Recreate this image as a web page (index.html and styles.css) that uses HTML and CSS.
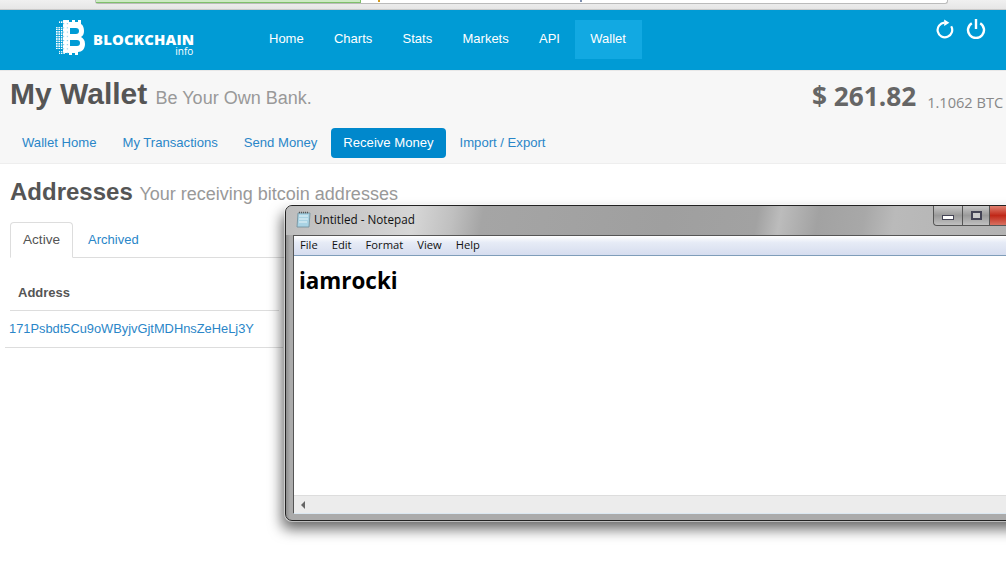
FILE: index.html
```html
<!DOCTYPE html>
<html lang="en">
<head>
<meta charset="utf-8">
<title>My Wallet</title>
<link rel="stylesheet" href="styles.css">
</head>
<body>
<div class="chrome">
  <div class="urlbar"><div class="secure"></div><i class="mark mark-a"></i><i class="mark mark-b"></i></div>
</div>
<header class="topbar">
  <a class="logo">
    <svg class="logo-mark" width="30" height="37" viewBox="0 0 30 37">
      <defs>
        <pattern id="dots" width="2.4" height="2.4" patternUnits="userSpaceOnUse">
          <rect width="1.6" height="1.6" fill="#fff"/>
        </pattern>
        <pattern id="holes" width="3.6" height="4.2" patternUnits="userSpaceOnUse">
          <rect width="1" height="1" fill="#5cbfe4"/>
        </pattern>
      </defs>
      <path d="M3 4h7V2H3zM0 8h7v22H0zM3 32h6v3H3z" fill="url(#dots)"/>
      <path d="M7 1h6v2h3V1h3v2h3V1h3v4c2 1 3 4 3 7 0 3-1 5-3 6 2 1 4 3 4 7 0 5-3 8-7 8v3h-3v-2h-3v2h-3v-2H7z" fill="#fff"/>
      <path d="M7 1h6v34H7z" fill="url(#holes)"/>
      <path d="M14 9h6c2 0 3 1 3 3s-1 3-3 3h-6zM14 21h7c2 0 3 1 3 3s-1 3-3 3h-7z" fill="#009bd5"/>
    </svg>
    <span class="logo-text"><span class="logo-name">BLOCKCHAIN</span><span class="logo-sub">info</span></span>
  </a>
  <nav class="mainnav">
    <a class="navitem">Home</a>
    <a class="navitem">Charts</a>
    <a class="navitem">Stats</a>
    <a class="navitem">Markets</a>
    <a class="navitem">API</a>
    <a class="navitem navitem-on">Wallet</a>
  </nav>
  <div class="tools">
    <svg width="20" height="20" viewBox="0 0 20 20" fill="none" stroke="#fff" stroke-width="2.2">
      <path d="M16.2 7.3A7.3 7.3 0 1 1 9.5 3.7"/>
      <path d="M9.2 .6l5.2 3.2-5.2 3.2z" fill="#fff" stroke="none"/>
    </svg>
    <svg width="20" height="20" viewBox="0 0 20 20" fill="none" stroke="#fff" stroke-width="2.4">
      <path d="M5.8 4.2a8 8 0 1 0 8.4 0"/>
      <path d="M10 0v10"/>
    </svg>
  </div>
</header>
<section class="subhead">
  <div class="titlerow">
    <h1 class="pagetitle">My Wallet <small class="tagline">Be Your Own Bank.</small></h1>
    <div class="balance"><span class="fiat">$ 261.82</span><span class="btc">1.1062 BTC</span></div>
  </div>
  <nav class="pills">
    <a class="pill">Wallet Home</a>
    <a class="pill">My Transactions</a>
    <a class="pill">Send Money</a>
    <a class="pill pill-on">Receive Money</a>
    <a class="pill">Import / Export</a>
  </nav>
</section>
<main class="content">
  <h2 class="sectiontitle">Addresses <small class="sectionsub">Your receiving bitcoin addresses</small></h2>
  <div class="tabs">
    <a class="tab tab-on">Active</a>
    <a class="tab">Archived</a>
  </div>
  <div class="tablehead">Address</div>
  <div class="tablerow"><a class="addr">171Psbdt5Cu9oWByjvGjtMDHnsZeHeLj3Y</a></div>
</main>
<div class="notepad">
  <div class="np-title">
    <svg class="np-icon" width="16" height="17" viewBox="0 0 16 17">
      <path d="M2 2h12l-1 14H1z" fill="#a9d3e4" stroke="#6d8b98" stroke-width=".8"/>
      <path d="M3 5h9M3 8h9M3 11h8" stroke="#e8f4f8" stroke-width="1"/>
      <path d="M3 1.5h10" stroke="#555" stroke-width="1.4" stroke-dasharray="1 1"/>
    </svg>
    <span class="np-name">Untitled - Notepad</span>
    <div class="np-buttons">
      <span class="np-btn np-min"><i class="np-minglyph"></i></span>
      <span class="np-btn np-max"><i class="np-maxglyph"></i></span>
      <span class="np-btn np-close"></span>
    </div>
  </div>
  <div class="np-client">
    <div class="np-menu">
      <span>File</span><span>Edit</span><span>Format</span><span>View</span><span>Help</span>
    </div>
    <div class="np-text">iamrocki</div>
    <div class="np-scroll"><i class="np-arrow"></i></div>
  </div>
</div>
</body>
</html>
```
FILE: styles.css
```css
html, body { margin: 0; padding: 0; }
body {
  width: 1006px;
  height: 567px;
  overflow: hidden;
  position: relative;
  background: #fff;
  font-family: "Liberation Sans", Arial, sans-serif;
  font-size: 13px;
  color: #555;
}
a { text-decoration: none; }
.chrome {
  height: 9px;
  background: linear-gradient(#f0f0f0, #e6e6e6);
  border-bottom: 1px solid #c9c9c9;
  padding-left: 95px;
}
.urlbar {
  width: 851px;
  height: 3px;
  background: #fff;
  border: 1px solid #bbb;
  border-top: 0;
  border-radius: 0 0 3px 3px;
  display: flex;
}
.secure { width: 264px; height: 2px; background: #cdeac4; border-bottom: 1px solid #7fc06b; border-right: 1px solid #7fc06b; }
.mark { width: 2px; height: 2px; }
.mark-a { background: #d49a1e; margin-left: 17px; }
.mark-b { background: #7d8fb0; margin-left: 200px; }
.topbar {
  height: 60px;
  background: #009bd5;
  display: flex;
  position: relative;
}
.logo { display: flex; margin-left: 56px; width: 198px; }
.logo-mark { margin-top: 9px; }
.logo-text { display: flex; flex-direction: column; align-items: flex-end; margin-left: 7px; padding-top: 23px; }
.logo-name { font-family: "Open Sans", sans-serif; font-weight: 800; font-size: 14.8px; line-height: 13px; color: #fff; letter-spacing: .2px; }
.logo-sub { font-family: "Open Sans", sans-serif; font-size: 10px; line-height: 11px; color: #fff; margin-right: 1px; }
.mainnav { display: flex; align-items: flex-start; padding-top: 10px; }
.navitem { color: #fff; font-size: 13px; padding: 0 15px; height: 39px; line-height: 38px; margin-right: .3px; }
.navitem-on { background: #12a9e2; padding-right: 16px; }
.tools { margin-left: auto; display: flex; gap: 11px; padding: 9px 20px 0 0; align-items: flex-start; height: 20px; }
.subhead {
  background: #f7f7f7;
  border-top: 1px solid #e8e8e8;
  border-bottom: 1px solid #eee;
  height: 92px;
}
.titlerow { display: flex; justify-content: space-between; height: 57px; }
.pagetitle { margin: 6px 0 0 10px; font-size: 30px; line-height: 34px; font-weight: bold; color: #555; }
.tagline { font-size: 18px; font-weight: normal; color: #999; }
.balance { display: flex; align-items: flex-start; margin-top: 6px; width: 194px; flex: none; white-space: nowrap; overflow: hidden; }
.fiat { font-family: "Open Sans", sans-serif; font-weight: bold; font-size: 26.2px; line-height: 38px; color: #666; }
.btc { font-family: "Open Sans", sans-serif; font-size: 14.6px; line-height: 20px; color: #888; margin: 15px 0 0 11px; }
.pills { display: flex; gap: 1px; padding-left: 10px; }
.pill { padding: 0 12px; height: 30px; line-height: 30px; color: #2a86c8; font-size: 13.1px; border-radius: 4px; margin-right: 1px; }
.pill-on { background: #0088cc; color: #fff; }
.content { padding: 0 0 0 5px; }
.sectiontitle { margin: 14px 0 0 5px; font-size: 24px; line-height: 28px; color: #555; font-weight: bold; }
.sectionsub { font-size: 18px; font-weight: normal; color: #999; }
.tabs { display: flex; margin: 14px 0 0 5px; border-bottom: 1px solid #ddd; height: 35px; width: 275px; }
.tab { padding: 0 14px; line-height: 35px; height: 36px; color: #2a86c8; font-size: 13px; margin-right: 1px; box-sizing: border-box; }
.tab-on { color: #555; font-size: 13.6px; line-height: 34px; border: 1px solid #ddd; border-bottom: 1px solid #fff; border-radius: 4px 4px 0 0; padding: 0 12px; }
.tablehead { width: 269px; margin-left: 5px; padding-left: 8px; height: 53px; line-height: 70px; box-sizing: border-box; font-weight: bold; color: #555; font-size: 13px; border-bottom: 1px solid #ddd; }
.tablerow { width: 274px; height: 36px; line-height: 35px; border-bottom: 1px solid #ddd; padding-left: 4px; }
.addr { color: #2a86c8; font-size: 12.85px; }
.notepad {
  position: absolute;
  left: 285px;
  top: 205px;
  width: 760px;
  height: 316px;
  box-sizing: border-box;
  border: 1px solid #222;
  border-radius: 7px;
  background: linear-gradient(90deg, #8e8e8e, #ababab 4px, #ababab);
  box-shadow: 0 0 0 1px rgba(255,255,255,.5), -3px 8px 14px rgba(0,0,0,.6);
  padding: 0 7px 6px 7px;
  display: flex;
  flex-direction: column;
}
.np-title { height: 29px; flex: none; display: flex; align-items: center; background: linear-gradient(100deg, #bcbcbc 0, #d6d6d6 17%, #c0c0c0 22%, #a5a5a5 26%, #9f9f9f 50%, #a2a2a2 62%, #bcbcbc 65%, #a2a2a2 70%, #a8a8a8 76%, #bababa 80%, #b0b0b0 100%); margin: 0 -7px; padding: 0 7px 3px; box-sizing: border-box; border-radius: 6px 6px 0 0; position: relative; }
.np-icon { margin-left: 3px; flex: none; }
.np-name { font-family: "Open Sans", sans-serif; font-size: 11.7px; color: #111; margin-left: 2px; }
.np-buttons { position: absolute; left: 647px; top: 0; display: flex; height: 19px; border: 1px solid #555; border-top: 0; border-radius: 0 0 4px 4px; }
.np-btn { display: flex; align-items: center; justify-content: center; height: 19px; background: linear-gradient(#c8c8c8, #9a9a9a 50%, #c0c0c0); }
.np-min { width: 28px; border-right: 1px solid #555; border-radius: 0 0 0 4px; }
.np-max { width: 26px; border-right: 1px solid #555; }
.np-close { width: 44px; background: linear-gradient(#e08070, #c02818 50%, #d87060); }
.np-minglyph { width: 10px; height: 3px; margin-top: 4px; border: 1px solid #445; background: #fff; }
.np-maxglyph { width: 7px; height: 5px; border: 2px solid #445; background: #ccc; }
.np-client { flex: 1; background: #fff; border: 1px solid #555; border-width: 1px 0 1px 1px; border-bottom-color: #dbe8f2; display: flex; flex-direction: column; min-height: 0; }
.np-menu { height: 19px; flex: none; background: linear-gradient(#ffffff, #e6ebf6 35%, #d6ddef); border-bottom: 1px solid #7f9db9; display: flex; font-family: "Open Sans", sans-serif; font-size: 11.2px; line-height: 17px; color: #111; padding-left: 6px; gap: 14px; }
.np-text { flex: 1; padding: 9px 0 0 5px; font-family: "Open Sans", sans-serif; font-weight: bold; font-size: 22.4px; line-height: 32px; color: #000; }
.np-scroll { height: 17px; flex: none; background: #ececec; border-top: 1px solid #ddd; display: flex; align-items: center; padding-left: 7px; }
.np-arrow { width: 0; height: 0; border: 4px solid transparent; border-left: 0; border-right: 4px solid #666; }
```
